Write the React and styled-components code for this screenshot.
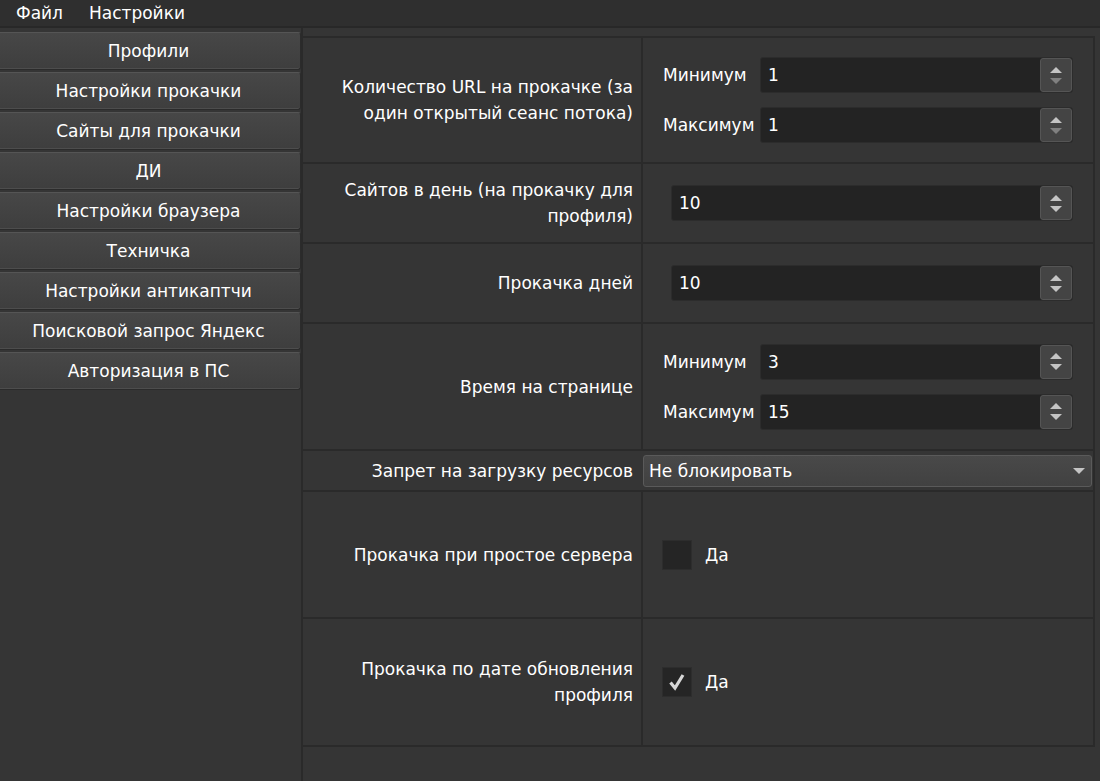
import styled, { createGlobalStyle } from 'styled-components';

const GlobalStyle = createGlobalStyle`
  html, body {
    margin: 0;
    padding: 0;
    background: #353535;
    font-family: "DejaVu Sans", "Liberation Sans", sans-serif;
    font-size: 17px;
    color: #fff;
  }
`;

const Window = styled.div`
  width: 1100px;
  height: 781px;
  display: flex;
  flex-direction: column;
  background: #353535;
  overflow: hidden;
`;

const MenuBar = styled.div`
  height: 26px;
  display: flex;
  align-items: center;
  gap: 26px;
  padding-left: 16px;
  background: #2f2f2f;
  border-bottom: 2px solid #282828;
`;

const MenuItem = styled.span`
  font-size: 17px;
`;

const Body = styled.div`
  flex: 1;
  display: flex;
`;

const Sidebar = styled.div`
  width: 301px;
  display: flex;
  flex-direction: column;
  gap: 2px;
  padding-top: 4px;
  border-right: 2px solid #2a2a2a;
`;

const NavButton = styled.button`
  height: 38px;
  margin-left: -4px;
  display: flex;
  align-items: center;
  justify-content: center;
  padding: 0;
  font-family: inherit;
  font-size: 17px;
  color: #fff;
  background: linear-gradient(#474747, #3e3e3e);
  border: 1px solid #2b2b2b;
  border-top-color: #555;
  border-radius: 3px;
  box-shadow: inset 0 -1px 0 #4d4d4d;
`;

const Main = styled.div`
  flex: 1;
  padding-top: 8px;
`;

const Form = styled.div`
  width: 790px;
  border-top: 2px solid #2a2a2a;
  border-right: 2px solid #2a2a2a;
`;

const Row = styled.div`
  height: ${(p) => p.$h}px;
  display: flex;
  border-bottom: 2px solid #2a2a2a;
`;

const LabelCell = styled.div`
  width: 330px;
  padding-right: 8px;
  display: flex;
  align-items: center;
  justify-content: flex-end;
  text-align: right;
  line-height: 26px;
  font-size: 17px;
  border-right: ${(p) => (p.$plain ? '2px solid transparent' : '2px solid #2a2a2a')};
`;

const FieldCell = styled.div`
  flex: 1;
  display: flex;
  flex-direction: column;
  justify-content: center;
  gap: 14px;
  padding: ${(p) => p.$pad || '0 20px 0 20px'};
`;

const PairRow = styled.div`
  display: flex;
  align-items: center;
`;

const PairLabel = styled.span`
  width: 97px;
  font-size: 17px;
`;

const SpinBox = styled.div`
  flex: 1;
  height: 34px;
  display: flex;
  background: #232323;
  border: 1px solid #2c2c2c;
  border-radius: 3px;
`;

const SpinValue = styled.span`
  flex: 1;
  display: flex;
  align-items: center;
  padding-left: 7px;
  font-size: 17px;
`;

const SpinButtons = styled.div`
  width: 30px;
  display: flex;
  flex-direction: column;
  align-items: center;
  justify-content: center;
  gap: 5px;
  background: #444;
  border: 1px solid #555;
  border-radius: 3px;
`;

const Arrow = styled.span`
  width: 0;
  height: 0;
  border-left: 6px solid transparent;
  border-right: 6px solid transparent;
  ${(p) =>
    p.$down
      ? `border-top: 6px solid ${p.$dim ? '#808080' : '#c4c4c4'};`
      : `border-bottom: 6px solid #c4c4c4;`}
`;

const Select = styled.div`
  height: 30px;
  display: flex;
  align-items: center;
  justify-content: space-between;
  padding: 0 6px 0 5px;
  background: linear-gradient(#494949, #414141);
  border: 1px solid #5a5a5a;
  border-radius: 3px;
  font-size: 17px;
`;

const CheckRow = styled.div`
  display: flex;
  align-items: center;
  gap: 13px;
`;

const CheckBox = styled.div`
  width: 30px;
  height: 30px;
  display: flex;
  align-items: center;
  justify-content: center;
  background: #252525;
  border: 1px solid #2d2d2d;
  box-sizing: border-box;
`;

const CheckText = styled.span`
  font-size: 17px;
`;

const Spin = ({ value, dim }) => (
  <SpinBox>
    <SpinValue>{value}</SpinValue>
    <SpinButtons>
      <Arrow />
      <Arrow $down $dim={dim} />
    </SpinButtons>
  </SpinBox>
);

const Check = ({ checked }) => (
  <CheckRow>
    <CheckBox>
      {checked && (
        <svg width="20" height="20" viewBox="0 0 20 20">
          <path d="M3.5 10.5 L8 16 L16 3" fill="none" stroke="#d6d6d6" strokeWidth="3.2" strokeLinejoin="miter" />
        </svg>
      )}
    </CheckBox>
    <CheckText>Да</CheckText>
  </CheckRow>
);

const nav = [
  'Профили',
  'Настройки прокачки',
  'Сайты для прокачки',
  'ДИ',
  'Настройки браузера',
  'Техничка',
  'Настройки антикаптчи',
  'Поисковой запрос Яндекс',
  'Авторизация в ПС',
];

const App = () => (
  <Window>
    <GlobalStyle />
    <MenuBar>
      <MenuItem>Файл</MenuItem>
      <MenuItem>Настройки</MenuItem>
    </MenuBar>
    <Body>
      <Sidebar>
        {nav.map((n) => (
          <NavButton key={n}>{n}</NavButton>
        ))}
      </Sidebar>
      <Main>
        <Form>
          <Row $h={124}>
            <LabelCell>
              Количество URL на прокачке (за
              <br />
              один открытый сеанс потока)
            </LabelCell>
            <FieldCell>
              <PairRow>
                <PairLabel>Минимум</PairLabel>
                <Spin value="1" dim />
              </PairRow>
              <PairRow>
                <PairLabel>Максимум</PairLabel>
                <Spin value="1" dim />
              </PairRow>
            </FieldCell>
          </Row>
          <Row $h={78}>
            <LabelCell>
              Сайтов в день (на прокачку для
              <br />
              профиля)
            </LabelCell>
            <FieldCell $pad="0 20px 0 28px">
              <PairRow>
                <Spin value="10" />
              </PairRow>
            </FieldCell>
          </Row>
          <Row $h={78}>
            <LabelCell>Прокачка дней</LabelCell>
            <FieldCell $pad="0 20px 0 28px">
              <PairRow>
                <Spin value="10" />
              </PairRow>
            </FieldCell>
          </Row>
          <Row $h={125}>
            <LabelCell>Время на странице</LabelCell>
            <FieldCell>
              <PairRow>
                <PairLabel>Минимум</PairLabel>
                <Spin value="3" />
              </PairRow>
              <PairRow>
                <PairLabel>Максимум</PairLabel>
                <Spin value="15" />
              </PairRow>
            </FieldCell>
          </Row>
          <Row $h={39}>
            <LabelCell $plain>Запрет на загрузку ресурсов</LabelCell>
            <FieldCell $pad="0 1px 0 0">
              <Select>
                <span>Не блокировать</span>
                <Arrow $down />
              </Select>
            </FieldCell>
          </Row>
          <Row $h={125}>
            <LabelCell>Прокачка при простое сервера</LabelCell>
            <FieldCell $pad="0 20px 0 19px">
              <Check />
            </FieldCell>
          </Row>
          <Row $h={126}>
            <LabelCell>
              Прокачка по дате обновления
              <br />
              профиля
            </LabelCell>
            <FieldCell $pad="0 20px 0 19px">
              <Check checked />
            </FieldCell>
          </Row>
        </Form>
      </Main>
    </Body>
  </Window>
);

export default App;
